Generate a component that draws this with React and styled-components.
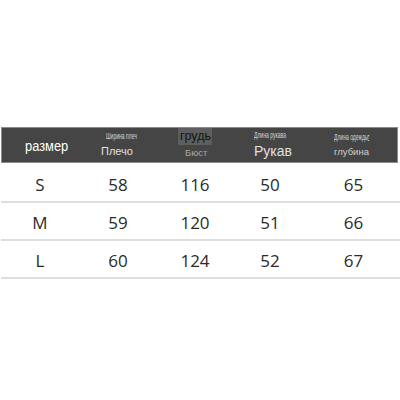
import styled, { createGlobalStyle } from 'styled-components'

const GlobalStyle = createGlobalStyle`
  html, body {
    margin: 0;
    padding: 0;
    background: #fff;
  }
`

const Page = styled.div`
  width: 400px;
  height: 400px;
  padding: 127px 0 0 1px;
  box-sizing: border-box;
  font-family: 'Liberation Sans', Arial, sans-serif;
`

const COLS = '78px 78px 76px 74px 93px'

const Header = styled.div`
  display: grid;
  grid-template-columns: ${COLS};
  width: 397px;
  height: 36px;
  box-sizing: border-box;
  background: #454545;
  border: 1px solid #8a8a8a;
`

const HeadCell = styled.div`
  display: flex;
  flex-direction: column;
  justify-content: center;
  align-items: flex-start;
  padding-left: ${(p) => p.$pad}px;
`

const Main = styled.span`
  color: #fff;
  font-size: 14px;
  margin-top: 1px;
  transform: scaleX(0.92);
  transform-origin: left center;
`

const TinyLine = styled.span`
  display: flex;
  align-items: center;
  margin-left: ${(p) => p.$shift || 0}px;
`

const Tiny = styled.span`
  display: block;
  color: #d6d6d6;
  font-size: 9px;
  line-height: 9px;
  width: 31px;
  white-space: nowrap;
  transform: scaleX(0.56);
  transform-origin: left center;
`

const Colon = styled.span`
  color: #e0e0e0;
  font-size: 10px;
  line-height: 9px;
  margin-left: 2px;
`

const Sub = styled.span`
  display: block;
  color: ${(p) => p.$color || '#e0e0e0'};
  font-size: ${(p) => p.$size}px;
  line-height: ${(p) => p.$size + 2}px;
  margin-top: ${(p) => p.$gap || 4}px;
  margin-left: ${(p) => p.$shift || 0}px;
  white-space: nowrap;
`

const Highlight = styled.span`
  display: block;
  background: #5e5e5e;
  color: #141414;
  font-size: 12.5px;
  line-height: 17px;
  padding: 0 1px 0 2px;
  margin-top: -3px;
`

const Body = styled.div`
  margin-top: 2px;
`

const Row = styled.div`
  display: grid;
  grid-template-columns: ${COLS};
  width: 399px;
  height: 38px;
  box-sizing: border-box;
  padding-top: 3px;
  border-bottom: 2px solid #dedede;
  align-items: center;
`

const Cell = styled.div`
  text-align: center;
  font-family: 'Open Sans', 'Liberation Sans', sans-serif;
  font-size: 17px;
  color: #2a2a2a;
`

const rows = [
  ['S', 58, 116, 50, 65],
  ['M', 59, 120, 51, 66],
  ['L', 60, 124, 52, 67],
]

export default function App() {
  return (
    <Page>
      <GlobalStyle />
      <Header>
        <HeadCell $pad={23}>
          <Main>размер</Main>
        </HeadCell>
        <HeadCell $pad={21}>
          <TinyLine $shift={5}>
            <Tiny>Ширина плеч</Tiny>
          </TinyLine>
          <Sub $size={11}>Плечо</Sub>
        </HeadCell>
        <HeadCell $pad={20}>
          <Highlight>грудь</Highlight>
          <Sub $size={9.5} $color="#a8a8a8" $gap={2} $shift={7}>
            Бюст
          </Sub>
        </HeadCell>
        <HeadCell $pad={20}>
          <TinyLine>
            <Tiny>Длина рукава</Tiny>
          </TinyLine>
          <Sub $size={14} $gap={3}>
            Рукав
          </Sub>
        </HeadCell>
        <HeadCell $pad={26}>
          <TinyLine>
            <Tiny>Длина одежды</Tiny>
            <Colon>:</Colon>
          </TinyLine>
          <Sub $size={9.5} $color="#cfcfcf" $gap={4}>
            глубина
          </Sub>
        </HeadCell>
      </Header>
      <Body>
        {rows.map((r) => (
          <Row key={r[0]}>
            {r.map((v, i) => (
              <Cell key={i}>{v}</Cell>
            ))}
          </Row>
        ))}
      </Body>
    </Page>
  )
}
